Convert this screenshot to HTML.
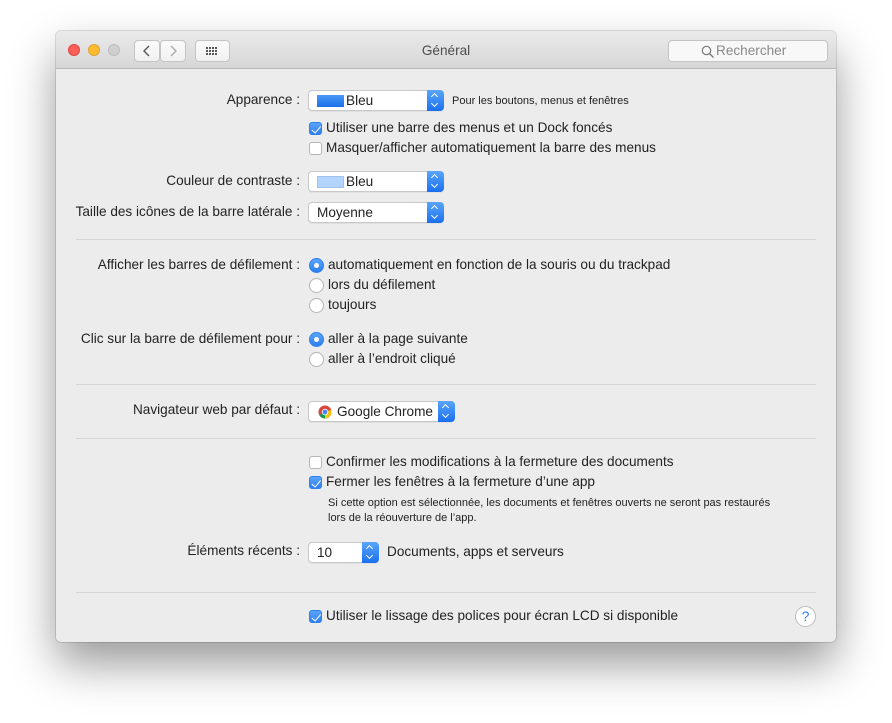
<!DOCTYPE html>
<html><head><meta charset="utf-8"><style>
*{box-sizing:border-box;margin:0;padding:0}
body{width:892px;height:723px;background:#fff;position:relative;font-family:"Liberation Sans",sans-serif;font-size:13.6px;color:#222;overflow:hidden}
.win{position:absolute;left:56px;top:31px;width:780px;height:611px;background:#ececec;border-radius:5px;box-shadow:0 22px 45px rgba(0,0,0,.4),0 0 0 1px rgba(0,0,0,.12)}
.tb{position:absolute;left:0;top:0;width:780px;height:38px;background:linear-gradient(#ebebeb,#d6d6d6);border-bottom:1px solid #b9b9b9;border-radius:5px 5px 0 0}
.dot{position:absolute;top:13px;width:12px;height:12px;border-radius:50%}
.btn{position:absolute;top:9px;height:22px;background:linear-gradient(#fbfbfb,#f1f1f1);border:1px solid #c4c4c4;border-radius:4px}
.t{position:absolute;white-space:nowrap;line-height:16px}
.r{text-align:right;right:592px}
.pop{position:absolute;height:21px;background:#fff;border:1px solid #c8c8c8;border-radius:4px;box-shadow:0 1px 0 rgba(0,0,0,.05)}
.pop .s{position:absolute;right:-1px;top:-1px;width:17px;height:21px;background:linear-gradient(#5aa5fb,#1a6fef);border-radius:0 4px 4px 0}
.pop .s:before{content:"";position:absolute;left:5px;top:4px;width:4px;height:4px;border-left:1.3px solid #fff;border-top:1.3px solid #fff;transform:rotate(45deg)}
.pop .s:after{content:"";position:absolute;left:5px;top:11px;width:4px;height:4px;border-right:1.3px solid #fff;border-bottom:1.3px solid #fff;transform:rotate(45deg)}
.pop .l{position:absolute;left:8px;top:2px;line-height:16px}
.cb{position:absolute;left:309px;width:13px;height:13px;border:1px solid #b5b5b5;border-radius:3px;background:#fff}
.cb.on{background:linear-gradient(#5aa5fb,#2d7ff0);border-color:#2d7ff0}
.cb.on:after{content:"";position:absolute;left:3.5px;top:0.5px;width:3.5px;height:7.5px;border-right:1.6px solid #fff;border-bottom:1.6px solid #fff;transform:rotate(40deg)}
.rd{position:absolute;left:309px;width:15px;height:15px;border:1px solid #b5b5b5;border-radius:50%;background:#fff}
.rd.on{background:linear-gradient(#5aa5fb,#2d7ff0);border-color:#2d7ff0}
.rd.on:after{content:"";position:absolute;left:4px;top:4px;width:5px;height:5px;border-radius:50%;background:#fff}
.sep{position:absolute;left:76px;width:740px;height:1px;background:#d6d6d6}
</style></head><body>
<div class="win">
<div class="tb">
<div class="dot" style="left:12px;background:#fc5f57;border:1px solid #df4744"></div>
<div class="dot" style="left:32px;background:#fdbc2e;border:1px solid #dea236"></div>
<div class="dot" style="left:52px;background:#cfcfcf;border:1px solid #bdbdbd"></div>
<div class="btn" style="left:78px;width:26px"><svg width="24" height="20"><path d="M14 5l-5 5 5 5" fill="none" stroke="#555" stroke-width="1.4"/></svg></div>
<div class="btn" style="left:104px;width:26px"><svg width="24" height="20"><path d="M10 5l5 5-5 5" fill="none" stroke="#aaa" stroke-width="1.4"/></svg></div>
<div class="btn" style="left:139px;width:35px"><svg width="33" height="20"><g fill="#555"><rect x="10" y="6" width="2" height="2"/><rect x="13" y="6" width="2" height="2"/><rect x="16" y="6" width="2" height="2"/><rect x="19" y="6" width="2" height="2"/><rect x="10" y="9" width="2" height="2"/><rect x="13" y="9" width="2" height="2"/><rect x="16" y="9" width="2" height="2"/><rect x="19" y="9" width="2" height="2"/><rect x="10" y="12" width="2" height="2"/><rect x="13" y="12" width="2" height="2"/><rect x="16" y="12" width="2" height="2"/><rect x="19" y="12" width="2" height="2"/></g></svg></div>
<div class="t" style="left:0;width:780px;text-align:center;top:12px;color:#4d4d4d">Général</div>
<div class="btn" style="left:612px;width:160px;background:#f8f8f8"><svg style="position:absolute;left:32px;top:4px" width="14" height="14"><circle cx="5.5" cy="5.5" r="4.2" fill="none" stroke="#777" stroke-width="1.2"/><path d="M8.5 8.5l4 4" stroke="#777" stroke-width="1.3"/></svg><span class="t" style="left:47px;top:2px;color:#888">Rechercher</span></div>
</div>
</div>
<div class="t r" style="top:92px">Apparence :</div>
<div class="pop" style="left:308px;top:90px;width:136px"><div style="position:absolute;left:8px;top:4px;width:27px;height:12px;background:linear-gradient(#4a9bf8,#1b6fe8)"></div><span class="l" style="left:37px">Bleu</span><div class="s"></div></div>
<div class="t" style="left:452px;top:93px;font-size:11px">Pour les boutons, menus et fenêtres</div>
<div class="cb on" style="top:122px"></div><div class="t" style="left:326px;top:120px">Utiliser une barre des menus et un Dock foncés</div>
<div class="cb" style="top:142px"></div><div class="t" style="left:326px;top:140px">Masquer/afficher automatiquement la barre des menus</div>
<div class="t r" style="top:173px">Couleur de contraste :</div>
<div class="pop" style="left:308px;top:171px;width:136px"><div style="position:absolute;left:8px;top:4px;width:27px;height:12px;background:#b3d4fb;border:1px solid #9fc3ee"></div><span class="l" style="left:37px">Bleu</span><div class="s"></div></div>
<div class="t r" style="top:204px">Taille des icônes de la barre latérale :</div>
<div class="pop" style="left:308px;top:202px;width:136px"><span class="l">Moyenne</span><div class="s"></div></div>
<div class="sep" style="top:239px"></div>
<div class="t r" style="top:257px">Afficher les barres de défilement :</div>
<div class="rd on" style="top:258px"></div><div class="t" style="left:328px;top:257px">automatiquement en fonction de la souris ou du trackpad</div>
<div class="rd" style="top:278px"></div><div class="t" style="left:328px;top:277px">lors du défilement</div>
<div class="rd" style="top:298px"></div><div class="t" style="left:328px;top:297px">toujours</div>
<div class="t r" style="top:331px">Clic sur la barre de défilement pour :</div>
<div class="rd on" style="top:332px"></div><div class="t" style="left:328px;top:331px">aller à la page suivante</div>
<div class="rd" style="top:352px"></div><div class="t" style="left:328px;top:351px">aller à l’endroit cliqué</div>
<div class="sep" style="top:384px"></div>
<div class="t r" style="top:402px">Navigateur web par défaut :</div>
<div class="pop" style="left:308px;top:401px;width:147px"><svg style="position:absolute;left:9px;top:3px" width="14" height="14" viewBox="0 0 14 14"><circle cx="7" cy="7" r="6.5" fill="#db4437"/><path d="M7 7L1.4 10.3A6.5 6.5 0 0 0 7 13.5L10.2 7.5Z" fill="#0f9d58"/><path d="M7 7L13.1 4.8A6.5 6.5 0 0 1 7 13.5Z" fill="#f4c20d"/><circle cx="7" cy="7" r="3.2" fill="#fff"/><circle cx="7" cy="7" r="2.4" fill="#4285f4"/></svg><span class="l" style="left:28px">Google Chrome</span><div class="s"></div></div>
<div class="sep" style="top:438px"></div>
<div class="cb" style="top:456px"></div><div class="t" style="left:326px;top:454px">Confirmer les modifications à la fermeture des documents</div>
<div class="cb on" style="top:476px"></div><div class="t" style="left:326px;top:474px">Fermer les fenêtres à la fermeture d’une app</div>
<div class="t" style="left:328px;top:496px;font-size:11px;line-height:15px">Si cette option est sélectionnée, les documents et fenêtres ouverts ne seront pas restaurés<br>lors de la réouverture de l’app.</div>
<div class="t r" style="top:543px">Éléments récents :</div>
<div class="pop" style="left:308px;top:542px;width:71px"><span class="l">10</span><div class="s"></div></div>
<div class="t" style="left:387px;top:544px">Documents, apps et serveurs</div>
<div class="sep" style="top:592px"></div>
<div class="cb on" style="top:610px"></div><div class="t" style="left:326px;top:608px">Utiliser le lissage des polices pour écran LCD si disponible</div>
<div style="position:absolute;left:795px;top:606px;width:21px;height:21px;border-radius:50%;background:#fff;border:1px solid #bdbdbd;color:#2d7ff0;text-align:center;line-height:19px;font-size:14px">?</div>
</body></html>
